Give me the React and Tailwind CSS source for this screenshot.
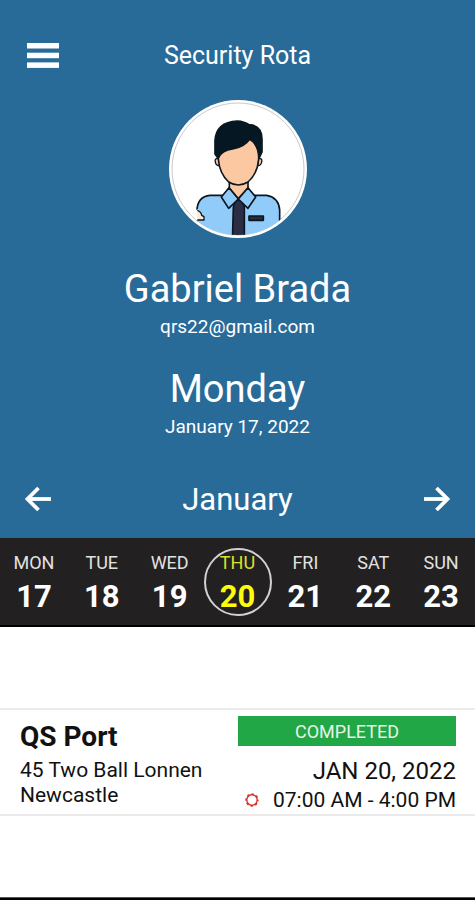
import { useState } from 'react';

const DAYS = [
  { name: 'MON', date: 17 },
  { name: 'TUE', date: 18 },
  { name: 'WED', date: 19 },
  { name: 'THU', date: 20 },
  { name: 'FRI', date: 21 },
  { name: 'SAT', date: 22 },
  { name: 'SUN', date: 23 },
];

const SHIFTS = [
  {
    id: 1,
    site: 'QS Port',
    address: ['45 Two Ball Lonnen', 'Newcastle'],
    status: 'COMPLETED',
    date: 'JAN 20, 2022',
    time: '07:00 AM - 4:00 PM',
  },
];

function MenuIcon() {
  return (
    <svg width="32" height="26" viewBox="0 0 32 26" fill="currentColor" aria-hidden="true">
      <rect y="0" width="32" height="5.5" />
      <rect y="9.7" width="32" height="5.5" />
      <rect y="19.4" width="32" height="5.5" />
    </svg>
  );
}

function ArrowIcon({ className }) {
  return (
    <svg className={className} width="28" height="26" viewBox="0 0 28 26" fill="none" stroke="currentColor" strokeWidth="3.8" aria-hidden="true">
      <path d="M27 13H3.5" />
      <path d="M14.5 2L3.5 13l11 11" />
    </svg>
  );
}

function SunIcon() {
  return (
    <svg width="14" height="16" viewBox="0 0 14 16" fill="none" stroke="#d8322c" aria-hidden="true">
      <circle cx="7" cy="7" r="5.2" strokeWidth="1.4" />
      <circle cx="7" cy="7" r="5.9" strokeWidth="1.6" strokeDasharray="2.4 2.234" strokeDashoffset="1.2" />
    </svg>
  );
}

function Avatar() {
  return (
    <svg className="h-[138px] w-[138px]" viewBox="27 28 414 414" role="img" aria-label="Security guard">
      <defs>
        <clipPath id="avatar-clip">
          <circle cx="234" cy="235" r="198" />
        </clipPath>
      </defs>
      <circle cx="234" cy="235" r="207" fill="#fff" />
      <circle cx="234" cy="235" r="198" fill="#fff" stroke="#c9c9cb" strokeWidth="3" />
      <g clipPath="url(#avatar-clip)" stroke="#0b1720" strokeWidth="5" strokeLinejoin="round">
        <path d="M111 460V358Q113 318 150 314H320Q356 320 359 358V460Z" fill="#90cbf9" />
        <path d="M106 359L113 356Q124 364 125 374L132 378V388H113V460H106Z" fill="#fff" stroke="none" />
        <path d="M112 359Q124 364 125 374L132 378V388H112" fill="#fde8d4" strokeWidth="4" />
        <path d="M208 270V292L235 324L264 292V270Z" fill="#fcc8a2" />
        <path d="M177 203Q163 202 166 214Q168 227 181 225ZM294 203Q308 202 305 214Q303 227 290 225Z" fill="#fcc8a2" strokeWidth="4" />
        <path d="M175 178V205Q178 248 206 274Q235 292 264 274Q293 248 296 205V178L270 135L190 160Z" fill="#fcc8a2" />
        <path d="M174 203L165 190V150Q168 94 232 91Q253 92 267 102Q306 104 306 146V184L297 203Q295 160 269 146Q252 170 218 175Q186 178 174 203Z" fill="#041722" />
        <path d="M220 350L226 327H246L253 350V460H217Z" fill="#2a2d43" />
        <path d="M207 291L184 319L206 353L235 325ZM264 291L287 319L264 353L235 325Z" fill="#90cbf9" />
        <rect x="267" y="376" width="43" height="13" fill="#292c3c" />
      </g>
    </svg>
  );
}

function DayButton({ day, selected, onSelect }) {
  return (
    <button
      type="button"
      aria-pressed={selected}
      onClick={() => onSelect(day.date)}
      className={`flex h-[68px] w-[68px] shrink-0 flex-col items-center gap-2 rounded-full border-2 pt-[3px] ${selected ? 'border-[#d2d0d1] text-[#fdfc0c]' : 'border-transparent text-white'}`}
    >
      <span className={`text-lg leading-5 ${selected ? 'text-[#dbe02c]' : 'text-[#e2e2e2]'}`}>{day.name}</span>
      <span className="text-[31px] leading-8 font-bold">{day.date}</span>
    </button>
  );
}

function ShiftCard({ shift }) {
  return (
    <article className="flex justify-between border-y-2 border-[#ebebeb] pt-1.5 pr-[19px] pl-5 text-[#111]">
      <div className="pt-[5px]">
        <h3 className="text-[28px] leading-8 font-bold">{shift.site}</h3>
        <address className="pt-[5px] text-[21px] leading-[25px] not-italic">
          {shift.address.map((line) => (
            <span key={line} className="block">{line}</span>
          ))}
        </address>
      </div>
      <div className="flex w-1/2 flex-col items-end">
        <p className="h-[30px] w-full bg-[#22a746] text-center text-lg leading-8 text-[#e4f6e5]">{shift.status}</p>
        <p className="mt-2.5 text-2xl leading-[31px]">{shift.date}</p>
        <p className="flex items-center gap-3.5 text-[21px] leading-[27px] whitespace-nowrap">
          <SunIcon />
          {shift.time}
        </p>
      </div>
    </article>
  );
}

export default function App() {
  const [selectedDay, setSelectedDay] = useState(20);

  return (
    <div className="flex min-h-screen flex-col bg-white font-[Roboto,sans-serif]">
      <header className="flex flex-col bg-[#286b99] pt-8 pb-3.5 text-white">
        <div className="grid h-12 grid-cols-[1fr_auto_1fr] items-center px-[27px]">
          <button type="button" aria-label="Open menu" className="justify-self-start">
            <MenuIcon />
          </button>
          <h1 className="text-[25px] leading-8">Security Rota</h1>
        </div>
        <div className="mt-5 flex flex-col items-center">
          <Avatar />
          <h2 className="mt-[27px] text-[38px] leading-12">Gabriel Brada</h2>
          <p className="mt-0.5 text-[19px] leading-6">qrs22@gmail.com</p>
          <p className="mt-[26px] text-[38px] leading-12">Monday</p>
          <p className="mt-0.5 text-[19px] leading-6">January 17, 2022</p>
        </div>
        <div className="mt-[37px] flex h-12 items-center justify-between px-6">
          <button type="button" aria-label="Previous month" className="pb-0.5">
            <ArrowIcon />
          </button>
          <h2 className="text-[31px] leading-12">January</h2>
          <button type="button" aria-label="Next month" className="pb-0.5">
            <ArrowIcon className="rotate-180" />
          </button>
        </div>
      </header>

      <nav aria-label="Days" className="grid grid-cols-7 justify-items-center border-b-2 border-black bg-[#232021] pt-2.5 pb-[9px]">
        {DAYS.map((day) => (
          <DayButton key={day.date} day={day} selected={day.date === selectedDay} onSelect={setSelectedDay} />
        ))}
      </nav>

      <main className="flex-1 pt-[81px]">
        {SHIFTS.map((shift) => (
          <ShiftCard key={shift.id} shift={shift} />
        ))}
      </main>

      <footer className="h-[3px] border-t border-[#555] bg-black" />
    </div>
  );
}
